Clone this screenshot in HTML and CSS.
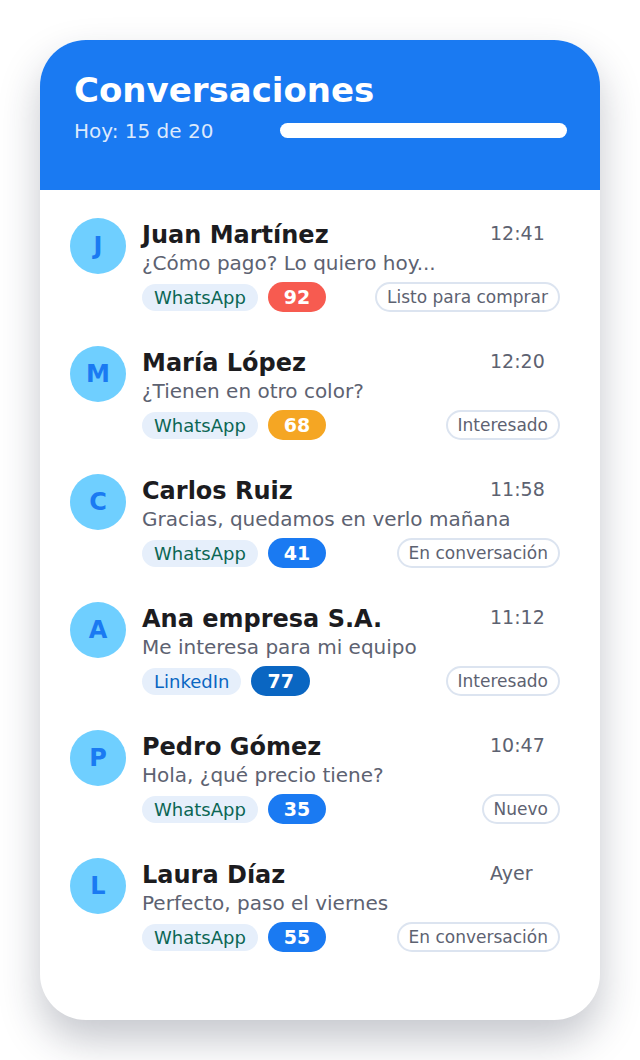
FILE: index.html
```html
<!DOCTYPE html>
<html lang="es">
<head>
    <meta charset="UTF-8">
    <meta name="viewport" content="width=device-width, initial-scale=1.0">
    <title>Conversaciones</title>
    <link rel="stylesheet" href="styles.css">
</head>
<body>
    <div class="phone">
        <div class="header">
            <h1>Conversaciones</h1>
            <div class="progress-row">
                <span class="today">Hoy: 15 de 20</span>
                <div class="bar"></div>
            </div>
        </div>

        <div class="chat-list">
            <div class="chat">
                <div class="avatar">J</div>
                <div class="chat-body">
                    <div class="top-row">
                        <span class="name">Juan Martínez</span>
                        <span class="time">12:41</span>
                    </div>
                    <p class="message">¿Cómo pago? Lo quiero hoy...</p>
                    <div class="tags">
                        <span class="source whatsapp">WhatsApp</span>
                        <span class="score hot">92</span>
                        <span class="status">Listo para comprar</span>
                    </div>
                </div>
            </div>

            <div class="chat">
                <div class="avatar">M</div>
                <div class="chat-body">
                    <div class="top-row">
                        <span class="name">María López</span>
                        <span class="time">12:20</span>
                    </div>
                    <p class="message">¿Tienen en otro color?</p>
                    <div class="tags">
                        <span class="source whatsapp">WhatsApp</span>
                        <span class="score warm">68</span>
                        <span class="status">Interesado</span>
                    </div>
                </div>
            </div>

            <div class="chat">
                <div class="avatar">C</div>
                <div class="chat-body">
                    <div class="top-row">
                        <span class="name">Carlos Ruiz</span>
                        <span class="time">11:58</span>
                    </div>
                    <p class="message">Gracias, quedamos en verlo mañana</p>
                    <div class="tags">
                        <span class="source whatsapp">WhatsApp</span>
                        <span class="score">41</span>
                        <span class="status">En conversación</span>
                    </div>
                </div>
            </div>

            <div class="chat">
                <div class="avatar">A</div>
                <div class="chat-body">
                    <div class="top-row">
                        <span class="name">Ana empresa S.A.</span>
                        <span class="time">11:12</span>
                    </div>
                    <p class="message">Me interesa para mi equipo</p>
                    <div class="tags">
                        <span class="source linkedin">LinkedIn</span>
                        <span class="score dark">77</span>
                        <span class="status">Interesado</span>
                    </div>
                </div>
            </div>

            <div class="chat">
                <div class="avatar">P</div>
                <div class="chat-body">
                    <div class="top-row">
                        <span class="name">Pedro Gómez</span>
                        <span class="time">10:47</span>
                    </div>
                    <p class="message">Hola, ¿qué precio tiene?</p>
                    <div class="tags">
                        <span class="source whatsapp">WhatsApp</span>
                        <span class="score">35</span>
                        <span class="status">Nuevo</span>
                    </div>
                </div>
            </div>

            <div class="chat">
                <div class="avatar">L</div>
                <div class="chat-body">
                    <div class="top-row">
                        <span class="name">Laura Díaz</span>
                        <span class="time">Ayer</span>
                    </div>
                    <p class="message">Perfecto, paso el viernes</p>
                    <div class="tags">
                        <span class="source whatsapp">WhatsApp</span>
                        <span class="score">55</span>
                        <span class="status">En conversación</span>
                    </div>
                </div>
            </div>
        </div>
    </div>
</body>
</html>
```

FILE: styles.css
```css
body {
    margin: 0;
    padding: 40px;
    background-color: #fff;
    font-family: "DejaVu Sans", sans-serif;
}
.phone {
    width: 560px;
    height: 980px;
    background-color: #fff;
    border-radius: 46px;
    overflow: hidden;
    box-shadow: 0 20px 40px rgba(30, 40, 60, 0.26);
}
.header {
    height: 150px;
    box-sizing: border-box;
    padding: 30px 33px 0 34px;
    background-color: #1a7af2;
    color: #fff;
}
.header h1 {
    margin: 0;
    font-size: 34px;
    line-height: 40px;
    font-weight: bold;
}
.progress-row {
    display: flex;
    align-items: center;
    justify-content: space-between;
    margin-top: 9px;
}
.today {
    font-size: 20px;
    line-height: 24px;
    color: rgba(255, 255, 255, 0.85);
}
.bar {
    width: 287px;
    height: 15px;
    margin-bottom: 2px;
    background-color: #fff;
    border-radius: 8px;
}
.chat-list {
    padding: 28px 40px 0 30px;
}
.chat {
    display: flex;
    gap: 16px;
    margin-bottom: 34px;
}
.avatar {
    flex: none;
    width: 56px;
    height: 56px;
    border-radius: 50%;
    background-color: #6fcfff;
    color: #1a7af2;
    font-size: 24px;
    font-weight: bold;
    display: flex;
    align-items: center;
    justify-content: center;
}
.chat-body {
    flex: 1;
    padding-top: 2px;
}
.top-row {
    display: flex;
    align-items: flex-start;
}
.name {
    flex: 1;
    font-size: 24px;
    line-height: 30px;
    font-weight: bold;
    color: #1c1c1f;
}
.time {
    width: 70px;
    font-size: 19px;
    line-height: 26px;
    color: #5d6271;
}
.message {
    margin: 0;
    font-size: 20px;
    line-height: 26px;
    color: #5d6271;
}
.tags {
    display: flex;
    align-items: center;
    margin-top: 6px;
    height: 30px;
}
.source {
    height: 27px;
    line-height: 27px;
    padding: 0 12px;
    border-radius: 14px;
    background-color: #e6effb;
    font-size: 18px;
}
.whatsapp {
    color: #0b6654;
}
.linkedin {
    color: #0a66c2;
}
.score {
    margin-left: 10px;
    height: 30px;
    line-height: 30px;
    padding: 0 16px;
    border-radius: 15px;
    background-color: #1a7af2;
    color: #fff;
    font-size: 19px;
    font-weight: bold;
}
.score.hot {
    background-color: #f75b50;
}
.score.warm {
    background-color: #f5a623;
}
.score.dark {
    background-color: #0a66c2;
}
.status {
    margin-left: auto;
    height: 26px;
    line-height: 26px;
    padding: 0 10px;
    border: 2px solid #dce4f0;
    border-radius: 15px;
    font-size: 17px;
    color: #5d6271;
}
```
